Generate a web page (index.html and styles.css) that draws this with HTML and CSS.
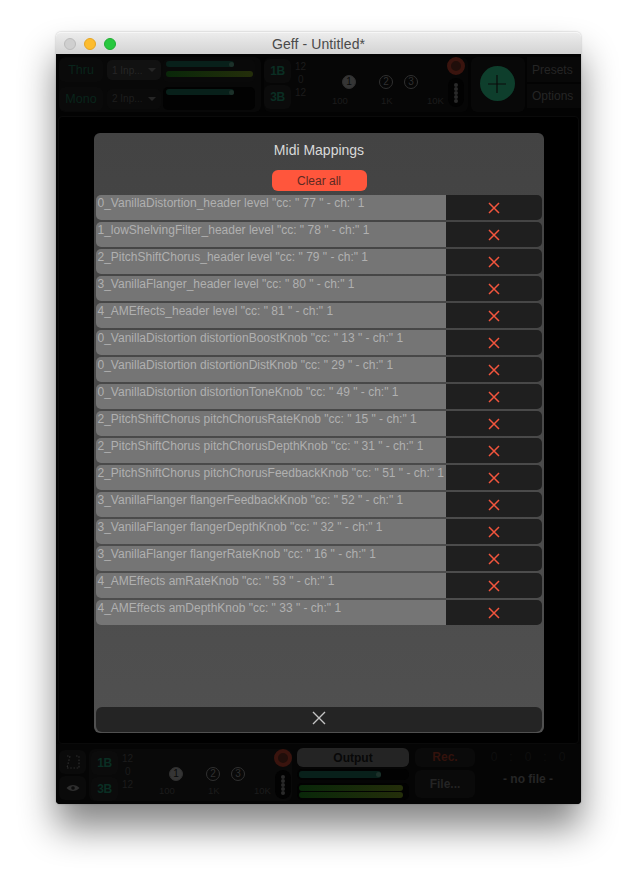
FILE: index.html
```html
<!DOCTYPE html>
<html lang="en">
<head>
  <meta charset="UTF-8">
  <title>Geff - Untitled*</title>
  <link rel="stylesheet" href="styles.css">
</head>
<body>
  <svg class="sprite" width="0" height="0">
    <symbol id="cross" viewBox="0 0 12 12"><path d="M1 1 L11 11 M11 1 L1 11" fill="none" stroke="currentColor" stroke-width="1.5"/></symbol>
  </svg>

  <div class="window">
    <div class="titlebar">
      <span class="light light-close"></span>
      <span class="light light-min"></span>
      <span class="light light-max"></span>
      <span class="title">Geff - Untitled*</span>
    </div>

    <div class="app">
      <div class="topbar">
        <div class="io-panel">
          <div class="io-row">
            <div class="tbtn">Thru</div>
            <div class="select">1 Inp... <i class="caret"></i></div>
            <div class="meters">
              <div class="meter"><div class="level level-teal level-a"><b></b></div></div>
              <div class="meter"><div class="level level-green level-full"></div></div>
            </div>
          </div>
          <div class="io-row">
            <div class="tbtn">Mono</div>
            <div class="select select-dim">2 Inp... <i class="caret"></i></div>
            <div class="meters meters-dark">
              <div class="meter"><div class="level level-teal level-a"><b></b></div></div>
              <div class="meter"></div>
            </div>
          </div>
        </div>

        <div class="eq-panel eq-top">
          <div class="bands"><div class="band">1B</div><div class="band">3B</div></div>
          <div class="db"><span>12</span><span>0</span><span>12</span></div>
          <div class="graph">
            <span class="node node-on node-1">1</span>
            <span class="node node-2">2</span>
            <span class="node node-3">3</span>
            <span class="freq freq-100">100</span>
            <span class="freq freq-1k">1K</span>
            <span class="freq freq-10k">10K</span>
          </div>
          <div class="side"><span class="rec-dot"></span><span class="dots"><i></i><i></i><i></i><i></i><i></i></span></div>
        </div>

        <div class="add-panel">
          <div class="add"><svg width="18" height="18" viewBox="0 0 18 18"><path d="M9 0 V18 M0 9 H18" stroke="#0b0b0b" stroke-width="1.2"/></svg></div>
        </div>

        <div class="menu"><div>Presets</div><div>Options</div></div>
      </div>

      <div class="stage"></div>

      <div class="bottombar">
        <div class="tools">
          <div class="tool">
            <svg width="14" height="14" viewBox="0 0 14 14" fill="none" stroke="#2a2a2a" stroke-width="1.2" stroke-dasharray="1.6 1.6"><path d="M1 1 H4 L1 13 M10 1 H13 L13 13 M1 13 H13"/></svg>
          </div>
          <div class="tool">
            <svg width="14" height="8" viewBox="0 0 14 8"><path d="M0.5 4 C4 0 10 0 13.5 4 C10 8 4 8 0.5 4 Z" fill="#2e2e2e"/><circle cx="7" cy="4" r="1.8" fill="#0c0c0c"/></svg>
          </div>
        </div>

        <div class="eq-panel eq-bottom">
          <div class="bands"><div class="band">1B</div><div class="band">3B</div></div>
          <div class="db"><span>12</span><span>0</span><span>12</span></div>
          <div class="graph">
            <span class="node node-on node-1">1</span>
            <span class="node node-2">2</span>
            <span class="node node-3">3</span>
            <span class="freq freq-100">100</span>
            <span class="freq freq-1k">1K</span>
            <span class="freq freq-10k">10K</span>
          </div>
          <div class="side"><span class="rec-dot"></span><span class="dots"><i></i><i></i><i></i><i></i><i></i></span></div>
        </div>

        <div class="output">
          <div class="output-btn">Output</div>
          <div class="meter output-gain"><div class="level level-teal level-b"><b></b></div></div>
          <div class="output-levels">
            <div class="level level-green level-full"></div>
            <div class="level level-green level-full"></div>
          </div>
        </div>

        <div class="rec-col">
          <div class="rec-btn">Rec.</div>
          <div class="file-btn">File...</div>
        </div>

        <div class="player">
          <div class="time"><span>0</span><span>:</span><span>0</span><span>:</span><span>0</span></div>
          <div class="file-name">- no file -</div>
        </div>
      </div>

      <div class="modal">
        <h1 class="modal-title">Midi Mappings</h1>
        <button class="clear-btn">Clear all</button>
        <div class="rows">
          <div class="row"><div class="row-text">0_VanillaDistortion_header level "cc: " 77 " - ch:" 1</div><div class="row-del"><svg><use href="#cross"/></svg></div></div>
          <div class="row"><div class="row-text">1_lowShelvingFilter_header level "cc: " 78 " - ch:" 1</div><div class="row-del"><svg><use href="#cross"/></svg></div></div>
          <div class="row"><div class="row-text">2_PitchShiftChorus_header level "cc: " 79 " - ch:" 1</div><div class="row-del"><svg><use href="#cross"/></svg></div></div>
          <div class="row"><div class="row-text">3_VanillaFlanger_header level "cc: " 80 " - ch:" 1</div><div class="row-del"><svg><use href="#cross"/></svg></div></div>
          <div class="row"><div class="row-text">4_AMEffects_header level "cc: " 81 " - ch:" 1</div><div class="row-del"><svg><use href="#cross"/></svg></div></div>
          <div class="row"><div class="row-text">0_VanillaDistortion distortionBoostKnob "cc: " 13 " - ch:" 1</div><div class="row-del"><svg><use href="#cross"/></svg></div></div>
          <div class="row"><div class="row-text">0_VanillaDistortion distortionDistKnob "cc: " 29 " - ch:" 1</div><div class="row-del"><svg><use href="#cross"/></svg></div></div>
          <div class="row"><div class="row-text">0_VanillaDistortion distortionToneKnob "cc: " 49 " - ch:" 1</div><div class="row-del"><svg><use href="#cross"/></svg></div></div>
          <div class="row"><div class="row-text">2_PitchShiftChorus pitchChorusRateKnob "cc: " 15 " - ch:" 1</div><div class="row-del"><svg><use href="#cross"/></svg></div></div>
          <div class="row"><div class="row-text">2_PitchShiftChorus pitchChorusDepthKnob "cc: " 31 " - ch:" 1</div><div class="row-del"><svg><use href="#cross"/></svg></div></div>
          <div class="row"><div class="row-text">2_PitchShiftChorus pitchChorusFeedbackKnob "cc: " 51 " - ch:" 1</div><div class="row-del"><svg><use href="#cross"/></svg></div></div>
          <div class="row"><div class="row-text">3_VanillaFlanger flangerFeedbackKnob "cc: " 52 " - ch:" 1</div><div class="row-del"><svg><use href="#cross"/></svg></div></div>
          <div class="row"><div class="row-text">3_VanillaFlanger flangerDepthKnob "cc: " 32 " - ch:" 1</div><div class="row-del"><svg><use href="#cross"/></svg></div></div>
          <div class="row"><div class="row-text">3_VanillaFlanger flangerRateKnob "cc: " 16 " - ch:" 1</div><div class="row-del"><svg><use href="#cross"/></svg></div></div>
          <div class="row"><div class="row-text">4_AMEffects amRateKnob "cc: " 53 " - ch:" 1</div><div class="row-del"><svg><use href="#cross"/></svg></div></div>
          <div class="row"><div class="row-text">4_AMEffects amDepthKnob "cc: " 33 " - ch:" 1</div><div class="row-del"><svg><use href="#cross"/></svg></div></div>
        </div>
        <div class="modal-close"><svg width="14" height="14" viewBox="0 0 14 14"><path d="M1 1 L13 13 M13 1 L1 13" fill="none" stroke="#c4c4c4" stroke-width="1.4"/></svg></div>
      </div>
    </div>
  </div>
</body>
</html>
```

FILE: styles.css
```css
* { box-sizing: border-box; }

body {
  margin: 0;
  height: 884px;
  overflow: hidden;
  background: #fff;
  font-family: "Liberation Sans", Arial, sans-serif;
}

.sprite { position: absolute; }

.window {
  width: 525px;
  height: 772px;
  margin: 32px 0 0 56px;
  border-radius: 5px 5px 4px 4px;
  box-shadow: 0 24px 36px rgba(0, 0, 0, 0.48), 0 0 2px rgba(0, 0, 0, 0.3);
  display: flex;
  flex-direction: column;
}

/* title bar */
.titlebar {
  height: 22px;
  flex: none;
  display: flex;
  align-items: center;
  gap: 8px;
  padding-left: 8px;
  position: relative;
  border-radius: 5px 5px 0 0;
  background: linear-gradient(#ececec, #d3d3d3);
  border-top: 1px solid #f6f6f6;
}
.light { width: 12px; height: 12px; border-radius: 50%; }
.light-close { background: #cfcfcf; border: 1px solid #bcbcbc; }
.light-min { background: #fdbc2e; border: 1px solid #e5a524; }
.light-max { background: #28c83f; border: 1px solid #20ae33; }
.title {
  position: absolute;
  left: 0;
  right: 0;
  text-align: center;
  font-size: 14px;
  letter-spacing: 0.1px;
  color: #4a4a4a;
}

/* app under the dialog */
.app {
  flex: 1;
  position: relative;
  display: flex;
  flex-direction: column;
  background: #030303;
  border-radius: 0 0 4px 4px;
  overflow: hidden;
}

.topbar {
  height: 62px;
  flex: none;
  display: flex;
  gap: 3px;
  padding: 3px 0 4px 3px;
}

.io-panel {
  width: 202px;
  display: flex;
  flex-direction: column;
  gap: 2px;
  background: #080808;
  border-radius: 6px;
}
.io-row { flex: 1; display: flex; align-items: center; gap: 4px; }
.tbtn {
  width: 44px;
  height: 24px;
  line-height: 24px;
  text-align: center;
  font-size: 12.5px;
  color: #09241b;
  background: #0a0a0a;
  border-radius: 6px;
}
.select {
  width: 54px;
  height: 20px;
  padding-left: 5px;
  display: flex;
  align-items: center;
  justify-content: space-between;
  padding-right: 5px;
  font-size: 10px;
  color: #262626;
  background: #111;
  border-radius: 5px;
}
.select-dim { background: #0a0a0a; color: #1e1e1e; }
.caret {
  width: 0;
  height: 0;
  border-left: 4px solid transparent;
  border-right: 4px solid transparent;
  border-top: 4px solid #262626;
}
.meters {
  width: 92px;
  height: 23px;
  margin-left: -2px;
  padding: 2px 3px;
  display: flex;
  flex-direction: column;
  gap: 3px;
  background: #090909;
  border-radius: 5px;
}
.meters-dark { background: #020202; }
.meter { height: 7px; border-radius: 4px; }
.level { height: 6px; border-radius: 3px; position: relative; }
.level-teal { background: #08201a; }
.level-green { background: linear-gradient(90deg, #092709, #242e0a); }
.level-a { width: 68px; }
.level-b { width: 82px; height: 7px; }
.level-full { width: 87px; }
.level b {
  position: absolute;
  right: 0;
  top: 1px;
  width: 5px;
  height: 5px;
  border-radius: 50%;
  background: #1c3029;
}

.eq-panel {
  display: flex;
  background: #090909;
  border-radius: 6px;
  position: relative;
}
.eq-top { width: 204px; background: #060606; }
.eq-bottom { width: 203px; margin-top: 5px; height: 52px; padding-left: 2px; }
.bands { display: flex; flex-direction: column; gap: 2px; padding-top: 2px; }
.band {
  width: 27px;
  height: 24px;
  line-height: 24px;
  text-align: center;
  font-size: 12px;
  font-weight: bold;
  letter-spacing: -0.4px;
  color: #0a2e23;
  background: #0b0b0b;
  border-radius: 6px;
}
.db {
  width: 20px;
  padding: 4px 0 0 4px;
  display: flex;
  flex-direction: column;
  gap: 1px;
  font-size: 10px;
  line-height: 12px;
  color: #1c1c1c;
}
.db span:nth-child(2) { padding-left: 3px; }

/* nodes sit on the frequency graph, so they get free placement */
.graph { flex: 1; position: relative; }
.node {
  position: absolute;
  top: 18px;
  width: 14px;
  height: 14px;
  border-radius: 50%;
  border: 1px solid #303030;
  font-size: 10px;
  line-height: 12px;
  text-align: center;
  color: #303030;
}
.node-on { background: #353535; color: #0a0a0a; }
.node-1 { left: 31px; }
.node-2 { left: 68px; }
.node-3 { left: 93px; }
.freq {
  position: absolute;
  top: 38px;
  font-size: 9.5px;
  color: #1c1c1c;
}
.eq-bottom .freq { top: 36px; }
.freq-100 { left: 21px; }
.freq-1k { left: 70px; }
.freq-10k { left: 116px; }

.side {
  width: 18px;
  margin-right: 3px;
  display: flex;
  flex-direction: column;
  align-items: center;
  gap: 3px;
}
.eq-bottom .side { margin-right: 0; }
.rec-dot {
  width: 18px;
  height: 18px;
  flex: none;
  border-radius: 50%;
  border: 4px solid #3a140e;
  background: #200e0a;
}
.dots {
  width: 16px;
  height: 29px;
  display: flex;
  flex-direction: column;
  align-items: center;
  justify-content: center;
  gap: 0;
  background: #020202;
  border-radius: 8px;
}
.dots i { width: 4px; height: 4px; border-radius: 50%; background: #2a2a2a; }

.add-panel {
  width: 54px;
  display: flex;
  align-items: center;
  justify-content: center;
  background: #080808;
  border-radius: 6px;
  padding: 0 2px 2px 0;
}
.add {
  width: 35px;
  height: 35px;
  border-radius: 50%;
  background: #0e3e2c;
  display: flex;
  align-items: center;
  justify-content: center;
}

.menu {
  flex: 1;
  display: flex;
  flex-direction: column;
  gap: 2px;
  margin: 0 0 4px -1px;
  font-size: 12px;
  color: #252525;
}
.menu div {
  flex: 1;
  padding: 1px 0 0 5px;
  display: flex;
  align-items: center;
  background: #080808;
}

.stage {
  flex: 1;
  border: 1px solid #0a0a0a;
  border-radius: 4px;
  margin: 0 2px;
  background: #000;
}

.bottombar {
  height: 60px;
  flex: none;
  display: flex;
  padding-left: 3px;
  background: #050505;
}
.tools {
  width: 27px;
  margin: 6px 3px 0 0;
  display: flex;
  flex-direction: column;
  gap: 2px;
}
.tool {
  height: 24px;
  display: flex;
  align-items: center;
  justify-content: center;
  background: #0a0a0a;
  border-radius: 6px;
}

.output {
  width: 112px;
  margin: 4px 0 0 5px;
  display: flex;
  flex-direction: column;
  gap: 2px;
}
.output-btn {
  height: 19px;
  line-height: 21px;
  text-align: center;
  font-size: 12px;
  font-weight: bold;
  color: #080808;
  background: #242424;
  border-radius: 6px;
}
.output-gain { height: 11px; padding: 2px; background: #020202; border-radius: 5px; }
.output-levels {
  margin-top: 1px;
  height: 17px;
  padding: 2px;
  display: flex;
  flex-direction: column;
  gap: 1px;
  background: #020202;
  border-radius: 5px;
}
.output-levels .level { height: 6px; width: 104px; }

.rec-col {
  width: 60px;
  margin: 4px 0 0 6px;
  display: flex;
  flex-direction: column;
  gap: 3px;
}
.rec-btn, .file-btn {
  text-align: center;
  font-size: 12px;
  font-weight: bold;
  background: #0a0a0a;
  border-radius: 6px;
}
.rec-btn { height: 19px; line-height: 19px; color: #33120c; }
.file-btn { height: 28px; line-height: 28px; color: #242424; }

.player { flex: 1; text-align: center; padding-top: 6px; }
.time {
  display: flex;
  justify-content: center;
  gap: 12px;
  font-size: 12px;
  line-height: 14px;
  color: #0e0e0e;
}
.file-name {
  margin-top: 8px;
  font-size: 12px;
  font-weight: bold;
  color: #262626;
}

/* dialog */
.modal {
  position: absolute;
  left: 38px;
  top: 79px;
  width: 450px;
  height: 600px;
  display: flex;
  flex-direction: column;
  align-items: center;
  padding: 0 2px;
  background: linear-gradient(#434343, #505050);
  border-radius: 6px;
}
.modal-title {
  margin: 9px 0 0;
  font-size: 14px;
  line-height: 16px;
  font-weight: normal;
  color: #d9d9d9;
}
.clear-btn {
  width: 95px;
  height: 21px;
  margin-top: 12px;
  padding: 0;
  border: 0;
  font: 12px "Liberation Sans", Arial, sans-serif;
  color: #5e2a22;
  background: #ff563c;
  border-radius: 6px;
}
.rows {
  flex: 1;
  align-self: stretch;
  margin-top: 4px;
  display: flex;
  flex-direction: column;
  gap: 2px;
}
.row { height: 25px; display: flex; flex: none; }
.row-text {
  width: 350px;
  padding: 1px 0 0 1.5px;
  font-size: 12px;
  line-height: 14px;
  white-space: nowrap;
  color: #b0b0b0;
  background: #757575;
  border-radius: 5px 0 0 5px;
}
.row-del {
  flex: 1;
  display: flex;
  align-items: center;
  justify-content: center;
  color: #f2553d;
  background: #1f1f1f;
  border-radius: 0 5px 5px 0;
}
.row-del svg { width: 12px; height: 12px; }
.modal-close {
  align-self: stretch;
  height: 25px;
  margin-bottom: 1px;
  padding-bottom: 3px;
  display: flex;
  align-items: center;
  justify-content: center;
  background: #242424;
  border-radius: 6px;
}
```
